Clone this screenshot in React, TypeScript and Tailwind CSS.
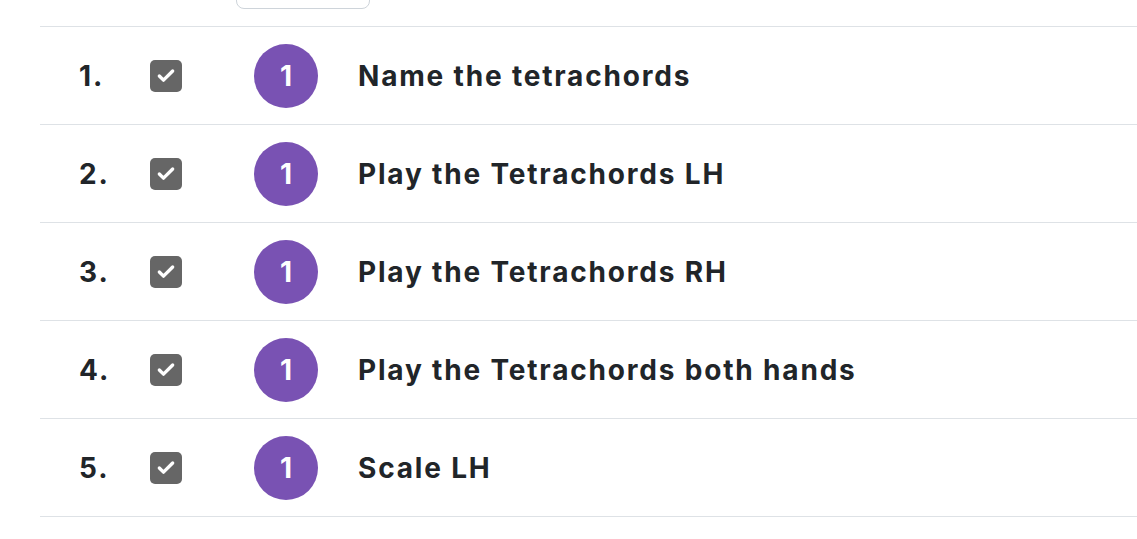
import { Check } from "lucide-react";

const steps = [
  "Name the tetrachords",
  "Play the Tetrachords LH",
  "Play the Tetrachords RH",
  "Play the Tetrachords both hands",
  "Scale LH",
];

export default function App() {
  return (
    <div className="min-h-screen bg-white font-['Inter',sans-serif] text-[#212529]">
      <div className="flex h-[26px] items-end pl-[236px]">
        <button
          type="button"
          className="mb-[17px] h-[40px] w-[134px] rounded-lg border border-[#ced4da] bg-white"
        />
      </div>
      <div className="ml-[40px] border-t border-[#dee2e6]">
        {steps.map((step, index) => (
          <div key={step} className="flex h-[98px] items-center border-b border-[#dee2e6]">
            <div className="w-[110px] pl-[39px] text-[28px] font-bold tracking-[0.07em]">{index + 1}.</div>
            <span className="flex size-[32px] items-center justify-center rounded-[5px] bg-[#666666]">
              <Check className="size-[20px] text-white" strokeWidth={4} aria-hidden="true" />
            </span>
            <span className="ml-[72px] flex size-[64px] items-center justify-center rounded-full bg-[#7952b3] text-[28px] font-bold text-white">
              1
            </span>
            <div className="ml-[40px] text-[28px] font-bold tracking-[0.065em]">{step}</div>
          </div>
        ))}
      </div>
    </div>
  );
}
